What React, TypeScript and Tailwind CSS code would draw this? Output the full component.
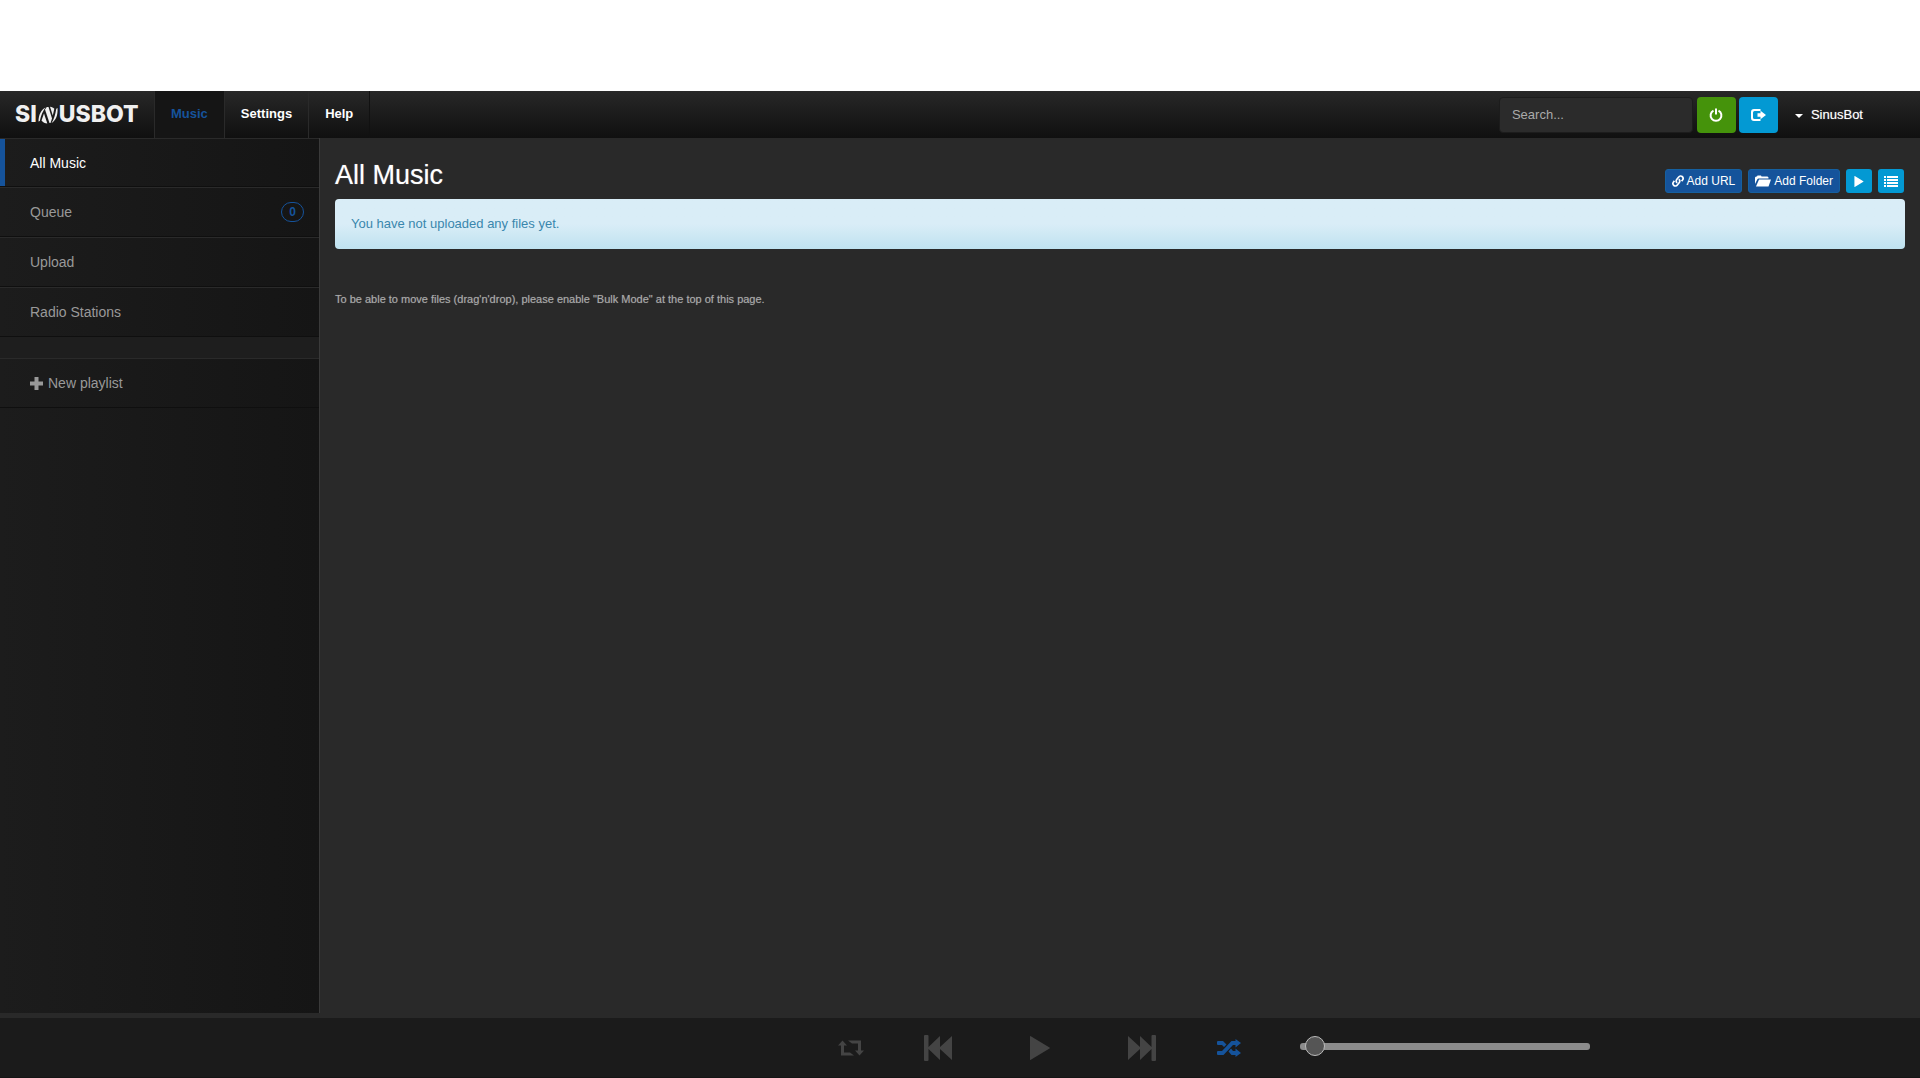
import { useState } from 'react';

const navItems = ['Music', 'Settings', 'Help'];

const sideItems = [
  { label: 'All Music' },
  { label: 'Queue', count: 0 },
  { label: 'Upload' },
  { label: 'Radio Stations' },
];

function Logo() {
  return (
    <a href="#" aria-label="SinusBot" className="flex h-full w-[154px] items-center pl-[15px] font-['Inter'] text-[23px] font-extrabold text-[#f0f0f0]">
      <span>SI</span>
      <svg viewBox="0 0 22 18" className="h-[18px] w-[22px]" fill="currentColor">
        <path d="M1.500 15.500C1.500 9 4 4 8.500 1.500C6 5 4 9 2.800 15Z" />
        <path d="M8 3.500L9.800 1H11.500L15 12.500L13.500 17H12.500Z" />
        <path d="M7 7.500L10.300 17.500C8 17.500 6 16.500 4.500 14.500Z" />
        <path d="M13 .7C15 1 16.300 1.600 17.300 2.800L15.800 9.500Z" />
        <path d="M20.500 2C21 9 19 14.500 14.500 17C17 13.500 18.300 9 19.300 2.800Z" />
      </svg>
      <span>USBOT</span>
    </a>
  );
}

function PowerIcon() {
  return (
    <svg viewBox="0 0 14 14" className="h-3.5 w-3.5" fill="none" stroke="currentColor" strokeWidth="2">
      <path d="M4.500 2.600A5.400 5.400 0 1 0 9.500 2.600" />
      <path d="M7 .5V6.500" />
    </svg>
  );
}

function LogoutIcon() {
  return (
    <svg viewBox="0 0 15 12" className="h-3 w-[15px]" fill="currentColor">
      <path d="M3 0H9.500V2H3.500Q2 2 2 3.500V8.500Q2 10 3.500 10H9.500V12H3Q0 12 0 9V3Q0 0 3 0Z" />
      <path d="M6.500 4.300H9.500V1.800L15 6L9.500 10.200V7.700H6.500Z" />
    </svg>
  );
}

function LinkIcon() {
  return (
    <svg viewBox="0 0 12 12" className="h-3 w-3" fill="none" stroke="currentColor" strokeWidth="1.700">
      <path d="M5.300 7.800C4 7 3.900 5.600 4.700 4.500L6.700 2C7.600 .8 9.100 .7 10.100 1.500C11.200 2.400 11.300 3.900 10.500 5L9.600 6.100" />
      <path d="M6.700 4.200C8 5 8.100 6.400 7.300 7.500L5.300 10C4.400 11.200 2.900 11.300 1.900 10.500C.8 9.600 .7 8.100 1.500 7L2.400 5.900" />
    </svg>
  );
}

function FolderIcon() {
  return (
    <svg viewBox="0 0 16 12" className="h-3 w-4" fill="currentColor">
      <path d="M0 9V2.500L1 1.500H2L2.500 .5H6L6.500 1.500H12.500L13.500 2.500V3.500H3.500L2.500 4Z" />
      <path d="M4 4.500H16L13.500 11.500H1Z" />
    </svg>
  );
}

function PlayIcon({ className }: { className: string }) {
  return (
    <svg viewBox="0 0 20 24" className={className} fill="currentColor">
      <path d="M0 .5Q0 -.3 .8 .2L19.500 11.400Q20.300 12 19.500 12.600L.8 23.800Q0 24.300 0 23.500Z" />
    </svg>
  );
}

function ListIcon() {
  return (
    <svg viewBox="0 0 14 11" className="h-[11px] w-3.5" fill="currentColor">
      <path d="M0 0H2V2H0ZM3 0H14V2H3ZM0 3H2V5H0ZM3 3H14V5H3ZM0 6H2V8H0ZM3 6H14V8H3ZM0 9H2V11H0ZM3 9H14V11H3Z" />
    </svg>
  );
}

function PlusIcon() {
  return (
    <svg viewBox="0 0 13 13" className="h-[13px] w-[13px]" fill="currentColor">
      <path d="M4.500 0H8.500V4.500H13V8.500H8.500V13H4.500V8.500H0V4.500H4.500Z" />
    </svg>
  );
}

function RepeatIcon() {
  return (
    <svg viewBox="0 0 26 16" className="h-4 w-[26px]" fill="currentColor">
      <path d="M4.500 .5L9 5.500H6V12.500H12L16 15.500H3V5.500H0Z" />
      <path d="M10 .5H23V10.500H26L21.500 15.500L17 10.500H20V3.500H14Z" />
    </svg>
  );
}

function PrevIcon() {
  return (
    <svg viewBox="0 0 28 26" className="h-[26px] w-7" fill="currentColor">
      <path d="M1 0H3.500Q4.500 0 4.500 1V12L16 1V12L28 1V25L16 14V25L4.500 14V25Q4.500 26 3.500 26H1Q0 26 0 25V1Q0 0 1 0Z" />
    </svg>
  );
}

function NextIcon() {
  return (
    <svg viewBox="0 0 28 26" className="h-[26px] w-7" fill="currentColor">
      <path d="M27 0H24.500Q23.500 0 23.500 1V12L12 1V12L0 1V25L12 14V25L23.500 14V25Q23.500 26 24.500 26H27Q28 26 28 25V1Q28 0 27 0Z" />
    </svg>
  );
}

function ShuffleIcon() {
  return (
    <svg viewBox="0 0 24 18" className="h-[18px] w-6" fill="currentColor">
      <path d="M1 2H6L9.500 5.500L7 8L5 6H1Q0 6 0 5V3Q0 2 1 2Z" />
      <path d="M1 12H5L14.500 2H18.500V0L24 4L18.500 8.500V6H16L6.500 16H1Q0 16 0 15V13Q0 12 1 12Z" />
      <path d="M14 9.500L16 12H18.500V9.500L24 14L18.500 18V16H14.500L11.500 12.500Z" />
    </svg>
  );
}

export default function App() {
  const [activeNav, setActiveNav] = useState('Music');
  const [activeSide, setActiveSide] = useState('All Music');
  const [volume, setVolume] = useState(2);

  return (
    <div className="flex min-h-screen flex-col bg-[#292929] font-['Liberation_Sans',Arial,sans-serif] text-[13px] text-white">
      <div className="h-[91px] bg-white" />

      <header className="flex h-[47px] items-center bg-linear-to-b from-[#282828] to-[#101010]">
        <Logo />
        <nav className="flex h-full border-r border-[#111]">
          {navItems.map((item) => (
            <a
              key={item}
              href="#"
              onClick={() => setActiveNav(item)}
              className={`flex h-full items-center border-l border-[#2a2a2a] px-4 pb-0.5 font-bold ${
                activeNav === item ? 'bg-[#151515] text-[#15539b]' : 'text-white'
              }`}
            >
              {item}
            </a>
          ))}
        </nav>
        <div className="ml-auto flex items-center pr-[57px]">
          <input
            type="text"
            aria-label="Search"
            placeholder="Search..."
            className="mr-1 h-9 w-[194px] rounded border border-[#1c1c1c] bg-[#2b2b2b] px-3 text-[13px] text-white outline-none placeholder:text-[#aaa]"
          />
          <button aria-label="Power" className="mr-[3px] flex h-9 w-[39px] items-center justify-center rounded bg-[#45930b]">
            <PowerIcon />
          </button>
          <button aria-label="Log out" className="flex h-9 w-[39px] items-center justify-center rounded bg-[#0399d3]">
            <LogoutIcon />
          </button>
          <button className="ml-[17px] flex items-center gap-2 text-shadow-[0_0_1px_#ffffff80]">
            <svg viewBox="0 0 8 4" className="mt-0.5 h-1 w-2" fill="currentColor">
              <path d="M0 0H8L4 4Z" />
            </svg>
            SinusBot
          </button>
        </div>
      </header>

      <div className="flex flex-1">
        <aside className="w-80 shrink-0 border-r border-[#3a3a3a] bg-linear-to-r from-[#1c1c1c] to-[#151515] text-sm text-[#999]">
          <ul>
            {sideItems.map((item) => (
              <li key={item.label} className="h-[50px] border-t border-b border-t-[#2a2a2a] border-b-[#0f0f0f] first:h-[49px]">
                <a
                  href="#"
                  onClick={() => setActiveSide(item.label)}
                  className={`flex h-full items-center justify-between border-l-[5px] pr-[15px] pl-[25px] ${
                    activeSide === item.label ? 'border-[#15539b] text-white' : 'border-transparent'
                  }`}
                >
                  {item.label}
                  {item.count !== undefined && (
                    <span className="flex h-5 w-[23px] items-center justify-center rounded-full border border-[#15539b] text-xs font-bold text-[#15539b]">
                      {item.count}
                    </span>
                  )}
                </a>
              </li>
            ))}
          </ul>
          <div className="h-[21px] bg-[#1e1e1e]" />
          <button className="flex h-[50px] w-full items-center gap-[5px] border-t border-b border-t-[#2a2a2a] border-b-[#0f0f0f] pl-[30px]">
            <PlusIcon />
            New playlist
          </button>
        </aside>

        <main className="flex-1 px-[15px] pt-5">
          <div className="flex h-[41px] justify-between">
            <h1 className="text-[27px] leading-[34px] text-shadow-[0_0_1px_#ffffff80]">All Music</h1>
            <div className="mt-[11px] mr-px flex h-6 gap-1.5 text-xs text-shadow-[0_0_1px_#ffffff80]">
              <button className="flex items-center gap-[3px] rounded-[3px] border border-[#1560a0] bg-[#15539b] px-1.5">
                <LinkIcon />
                Add URL
              </button>
              <button className="flex items-center gap-[3px] rounded-[3px] border border-[#1560a0] bg-[#15539b] px-1.5">
                <FolderIcon />
                Add Folder
              </button>
              <button aria-label="Play all" className="flex w-[26px] items-center justify-center rounded-[3px] bg-[#0399d3]">
                <PlayIcon className="h-[11px] w-[10px]" />
              </button>
              <button aria-label="Bulk mode" className="flex w-[26px] items-center justify-center rounded-[3px] bg-[#0399d3]">
                <ListIcon />
              </button>
            </div>
          </div>
          <div role="alert" className="flex h-[50px] items-center rounded bg-linear-to-b from-[#d9edf7] from-50% to-[#bfe2f0] px-4 text-[#3a87ad]">
            You have not uploaded any files yet.
          </div>
          <p className="mt-[42px] text-[11px] leading-4 text-[#aaa] text-shadow-[0_0_1px_#aaaaaa80]">
            To be able to move files (drag'n'drop), please enable "Bulk Mode" at the top of this page.
          </p>
        </main>
      </div>

      <footer className="mt-[5px] flex h-[60px] items-center border-b border-[#151515] bg-[#1b1b1b] pl-[43%] text-[#444]">
        <button aria-label="Repeat" className="mr-3 flex w-[50px] justify-center">
          <RepeatIcon />
        </button>
        <button aria-label="Previous" className="flex w-[100px] justify-center">
          <PrevIcon />
        </button>
        <button aria-label="Play" className="mx-0.5 flex w-[100px] justify-center">
          <PlayIcon className="h-6 w-5" />
        </button>
        <button aria-label="Next" className="flex w-[100px] justify-center">
          <NextIcon />
        </button>
        <button aria-label="Shuffle" className="ml-3 flex w-[50px] justify-center text-[#15539b]">
          <ShuffleIcon />
        </button>
        <input
          type="range"
          aria-label="Volume"
          min={0}
          max={100}
          value={volume}
          onChange={(e) => setVolume(Number(e.target.value))}
          className="mb-0.5 ml-[46px] h-5 w-[290px] appearance-none bg-transparent [&::-webkit-slider-runnable-track]:h-[7px] [&::-webkit-slider-runnable-track]:rounded-[3px] [&::-webkit-slider-runnable-track]:bg-[#8c8c8c] [&::-webkit-slider-thumb]:-mt-[7px] [&::-webkit-slider-thumb]:h-5 [&::-webkit-slider-thumb]:w-5 [&::-webkit-slider-thumb]:appearance-none [&::-webkit-slider-thumb]:rounded-full [&::-webkit-slider-thumb]:border [&::-webkit-slider-thumb]:border-[#bbb] [&::-webkit-slider-thumb]:bg-[#555]"
        />
      </footer>
    </div>
  );
}
